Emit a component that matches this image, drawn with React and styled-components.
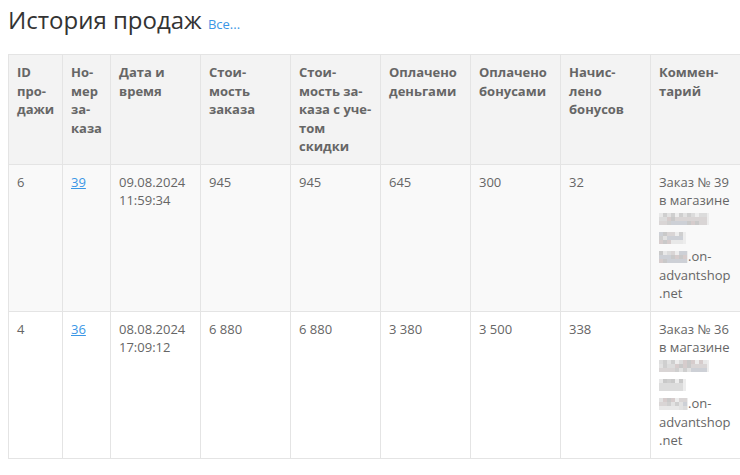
import React from 'react';
import styled, { createGlobalStyle } from 'styled-components';

const GlobalStyle = createGlobalStyle`
  html, body {
    margin: 0;
    padding: 0;
    background: #ffffff;
    overflow: hidden;
  }
  body {
    font-family: "Open Sans", "Liberation Sans", sans-serif;
    font-size: 13px;
    line-height: 1.428571;
    color: #666666;
  }
`;

const columns = [
  { title: 'ID\nпро-\nдажи', width: 54 },
  { title: 'Но-\nмер\nза-\nказа', width: 48 },
  { title: 'Дата и\nвремя', width: 90 },
  { title: 'Стои-\nмость\nзаказа', width: 90 },
  { title: 'Стои-\nмость за-\nказа с уче-\nтом\nскидки', width: 90 },
  { title: 'Оплачено\nденьгами', width: 90 },
  { title: 'Оплачено\nбонусами', width: 90 },
  { title: 'Начис-\nлено\nбонусов', width: 90 },
  { title: 'Коммен-\nтарий', width: 92 },
];

const sales = [
  {
    id: '6',
    order: '39',
    date: '09.08.2024',
    time: '11:59:34',
    total: '945',
    discounted: '945',
    money: '645',
    bonuses: '300',
    accrued: '32',
    seed: 3,
  },
  {
    id: '4',
    order: '36',
    date: '08.08.2024',
    time: '17:09:12',
    total: '6 880',
    discounted: '6 880',
    money: '3 380',
    bonuses: '3 500',
    accrued: '338',
    seed: 11,
  },
];

const shades = ['#dcdcdc', '#cfcfcf', '#e8e8e8', '#d6cccc', '#cdd0d6', '#e2e2e2', '#d9d5d5', '#c9c9c9'];

// pixelated placeholder for the hidden shop name
function Mosaic({ width, seed }) {
  const cell = 4;
  const cols = Math.ceil(width / cell);
  const rects = [];
  let s = seed * 7919 + width;
  for (let r = 0; r < 3; r++) {
    for (let c = 0; c < cols; c++) {
      s = (s * 1103515245 + 12345) % 2147483648;
      const fade = c === cols - 1 || (r === 0 && c % 5 === 4);
      rects.push(
        <rect
          key={`${r}-${c}`}
          x={c * cell}
          y={r * cell}
          width={cell}
          height={cell}
          fill={fade ? '#ededed' : shades[(s >> 8) % shades.length]}
        />
      );
    }
  }
  return (
    <MosaicBox width={width} height={12} viewBox={`0 0 ${width} 12`}>
      {rects}
    </MosaicBox>
  );
}

export default function App() {
  return (
    <Page>
      <GlobalStyle />
      <Title>
        История продаж <AllLink href="#">Все...</AllLink>
      </Title>

      <TableWrap>
        <Table>
          <colgroup>
            {columns.map((col, i) => (
              <col key={i} style={{ width: col.width }} />
            ))}
          </colgroup>
          <thead>
            <tr>
              {columns.map((col, i) => (
                <HeadCell key={i}>{col.title}</HeadCell>
              ))}
            </tr>
          </thead>
          <tbody>
            {sales.map((sale, i) => (
              <Row key={sale.id} $striped={i % 2 === 0}>
                <Cell>{sale.id}</Cell>
                <Cell>
                  <OrderLink href="#">{sale.order}</OrderLink>
                </Cell>
                <Cell>
                  {sale.date}
                  <br />
                  {sale.time}
                </Cell>
                <Cell>{sale.total}</Cell>
                <Cell>{sale.discounted}</Cell>
                <Cell>{sale.money}</Cell>
                <Cell>{sale.bonuses}</Cell>
                <Cell>{sale.accrued}</Cell>
                <Cell>
                  Заказ № {sale.order}
                  <br />
                  в магазине
                  <br />
                  <Mosaic width={50} seed={sale.seed} />
                  <br />
                  <Mosaic width={27} seed={sale.seed + 1} />
                  <br />
                  <Mosaic width={29} seed={sale.seed + 2} />
                  .on-
                  <br />
                  advantshop
                  <br />
                  .net
                </Cell>
              </Row>
            ))}
          </tbody>
        </Table>
      </TableWrap>
    </Page>
  );
}

const Page = styled.div`
  padding: 8px 0 8px 8px;
`;

const Title = styled.h2`
  margin: 0 0 18px;
  font-size: 24px;
  font-weight: 400;
  line-height: 24px;
  color: #333333;
`;

const AllLink = styled.a`
  font-size: 13px;
  color: #3b97e6;
  text-decoration: none;
`;

const TableWrap = styled.div`
  overflow: hidden;
`;

const Table = styled.table`
  table-layout: fixed;
  border-collapse: collapse;
  width: 734px;
`;

const HeadCell = styled.th`
  padding: 8px;
  text-align: left;
  vertical-align: top;
  font-weight: 700;
  color: #666666;
  white-space: pre-line;
  background: #f3f3f3;
  border: 1px solid #e4e4e4;
`;

const Row = styled.tr`
  background: ${props => (props.$striped ? '#f9f9f9' : '#ffffff')};
`;

const Cell = styled.td`
  padding: 8px;
  vertical-align: top;
  border: 1px solid #e4e4e4;
  color: #666666;
`;

const OrderLink = styled.a`
  color: #3b97e6;
  text-decoration: underline;
`;

const MosaicBox = styled.svg`
  display: inline-block;
  vertical-align: middle;
  margin-top: -2px;
`;
